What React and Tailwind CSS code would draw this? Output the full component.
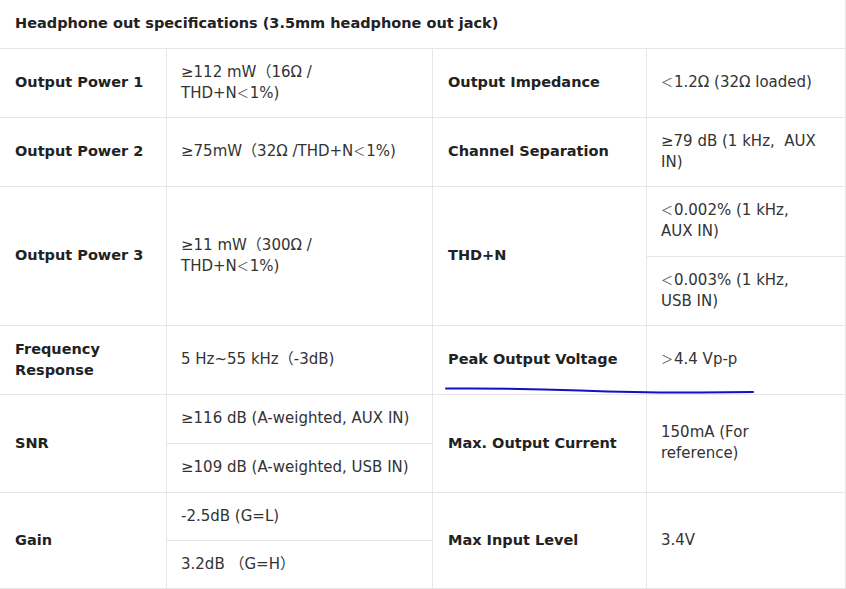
// App.jsx
const cellBase = 'border border-[#e6e6e6] align-middle';

const Label = ({ children, rowSpan }) => (
  <td rowSpan={rowSpan} className={`${cellBase} pl-[15px] pr-[12px] text-[14.5px] leading-[21px] font-bold text-[#222]`}>
    {children}
  </td>
);

const Value = ({ children, rowSpan, narrow }) => (
  <td
    rowSpan={rowSpan}
    className={`${cellBase} pl-[14px] ${narrow ? 'pr-[26px]' : 'pr-[22px]'} text-[15px] leading-[21px] text-[#333]`}
  >
    {children}
  </td>
);

// fullwidth brackets render thin and light in the reference
const Lt = () => <span className="inline-block w-[13px] text-[12px] leading-none text-[#555]">＜</span>;
const Gt = () => <span className="inline-block w-[13px] text-[12px] leading-none text-[#555]">＞</span>;

const App = () => {
  return (
    <div
      className="relative w-[846px] h-[589px] bg-white overflow-hidden"
      style={{ fontFamily: '"DejaVu Sans", "Noto Sans CJK SC", sans-serif' }}
    >
      <table className="table-fixed border-collapse w-[847px] -ml-px">
        <colgroup>
          <col className="w-[167px]" />
          <col className="w-[266px]" />
          <col className="w-[214px]" />
          <col className="w-[199px]" />
        </colgroup>
        <tbody>
          <tr className="h-[48px]">
            <td colSpan={4} className={`${cellBase} border-t-0 pl-[15px] text-[14.5px] font-bold text-[#222]`}>
              Headphone out specifications (3.5mm headphone out jack)
            </td>
          </tr>
          <tr className="h-[69px]">
            <Label>Output Power 1</Label>
            <Value>
              ≥112 mW（16Ω / <span className="whitespace-nowrap">THD+N<Lt />1%)</span>
            </Value>
            <Label>Output Impedance</Label>
            <Value narrow><Lt />1.2Ω (32Ω loaded)</Value>
          </tr>
          <tr className="h-[69px]">
            <Label>Output Power 2</Label>
            <Value>≥75mW（32Ω /THD+N<Lt />1%)</Value>
            <Label>Channel Separation</Label>
            <Value narrow>≥79 dB (1 kHz,&nbsp; AUX IN)</Value>
          </tr>
          <tr className="h-[70px]">
            <Label rowSpan={2}>Output Power 3</Label>
            <Value rowSpan={2}>
              ≥11 mW（300Ω / <span className="whitespace-nowrap">THD+N<Lt />1%)</span>
            </Value>
            <Label rowSpan={2}>THD+N</Label>
            <Value narrow>
              <Lt />0.002% (1 kHz,
              <br />
              AUX IN)
            </Value>
          </tr>
          <tr className="h-[69px]">
            <Value narrow>
              <Lt />0.003% (1 kHz,
              <br />
              USB IN)
            </Value>
          </tr>
          <tr className="h-[69px]">
            <Label>Frequency Response</Label>
            <Value>5 Hz~55 kHz（-3dB)</Value>
            <Label>Peak Output Voltage</Label>
            <Value narrow><Gt />4.4 Vp-p</Value>
          </tr>
          <tr className="h-[49px]">
            <Label rowSpan={2}>SNR</Label>
            <Value>≥116 dB (A-weighted, AUX IN)</Value>
            <Label rowSpan={2}>Max. Output Current</Label>
            <Value narrow rowSpan={2}>150mA (For reference)</Value>
          </tr>
          <tr className="h-[49px]">
            <Value>≥109 dB (A-weighted, USB IN)</Value>
          </tr>
          <tr className="h-[48px]">
            <Label rowSpan={2}>Gain</Label>
            <Value>-2.5dB (G=L)</Value>
            <Label rowSpan={2}>Max Input Level</Label>
            <Value narrow rowSpan={2}>3.4V</Value>
          </tr>
          <tr className="h-[48px]">
            <Value>3.2dB （G=H）</Value>
          </tr>
        </tbody>
      </table>

      {/* hand-drawn underline annotation */}
      <svg className="absolute left-0 top-0 pointer-events-none" width="846" height="589">
        <path
          d="M446 388.5 C 500 388, 540 389, 580 390.5 S 650 392.8, 700 392.5 L 753 392"
          fill="none"
          stroke="#1010c8"
          strokeWidth="2"
          strokeLinecap="round"
        />
      </svg>
    </div>
  );
};

export default App;
